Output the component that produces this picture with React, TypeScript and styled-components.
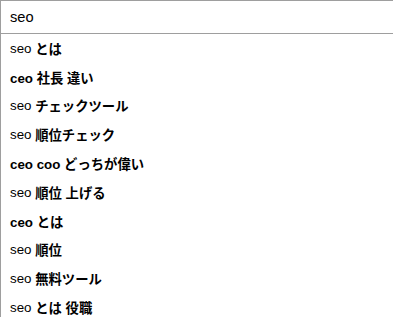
import React from "react";
import styled, { createGlobalStyle } from "styled-components";

const Global = createGlobalStyle`
  html, body { margin: 0; padding: 0; background: #fff; overflow: hidden; }
  body { font-family: "Liberation Sans", Arial, "Noto Sans CJK JP", sans-serif; color: #000; }
`;

const Wrap = styled.div`
  width: 393px;
  display: flex;
  flex-direction: column;
  border-left: 1px solid #9e9e9e;
  box-sizing: border-box;
  overflow: hidden;
`;

const SearchBox = styled.div`
  height: 32px;
  border-top: 1px solid #9e9e9e;
  border-bottom: 1px solid #9e9e9e;
  display: flex;
  align-items: center;
  padding-left: 9px;
  font-size: 14.67px;
`;

const List = styled.ul`
  list-style: none;
  margin: 0;
  padding: 0;
  display: flex;
  flex-direction: column;
`;

const Item = styled.li`
  height: 28.8px;
  display: flex;
  align-items: center;
  padding-left: 9px;
  font-size: 13.33px;
  white-space: pre;
`;

const Match = styled.span`
  font-weight: 400;
`;

const Rest = styled.span`
  font-weight: 700;
`;

const suggestions: [string, string][] = [
  ["seo", " とは"],
  ["", "ceo 社長 違い"],
  ["seo", " チェックツール"],
  ["seo", " 順位チェック"],
  ["", "ceo coo どっちが偉い"],
  ["seo", " 順位 上げる"],
  ["", "ceo とは"],
  ["seo", " 順位"],
  ["seo", " 無料ツール"],
  ["seo", " とは 役職"],
];

export default function App() {
  return (
    <>
      <Global />
      <Wrap>
        <SearchBox>seo</SearchBox>
        <List>
          {suggestions.map(([m, r], i) => (
            <Item key={i}>
              {m && <Match>{m}</Match>}
              <Rest>{r}</Rest>
            </Item>
          ))}
        </List>
      </Wrap>
    </>
  );
}
